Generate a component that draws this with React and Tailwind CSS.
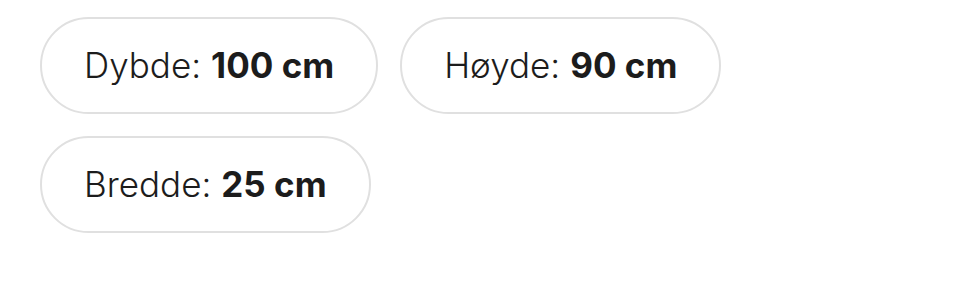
export default function App() {
  const items = [
    ["Dybde:", "100 cm"],
    ["Høyde:", "90 cm"],
    ["Bredde:", "25 cm"],
  ];
  return (
    <div className="w-[960px] h-[290px] bg-white">
      <div className="flex flex-wrap gap-[22px] pl-[40px] pt-[17px] pr-[20px]">
        {items.map(([k, v]) => (
          <div
            key={k}
            className="h-[97px] px-[42px] flex items-center rounded-full border-2 border-[#e0e0e0] text-[#1c1c1c] text-[35px] leading-none whitespace-nowrap"
            style={{ fontFamily: "Inter, 'Noto Sans', sans-serif" }}
          >
            <span className="font-light">{k}</span>
            <span className="font-bold ml-[10px]">{v}</span>
          </div>
        ))}
      </div>
    </div>
  );
}
